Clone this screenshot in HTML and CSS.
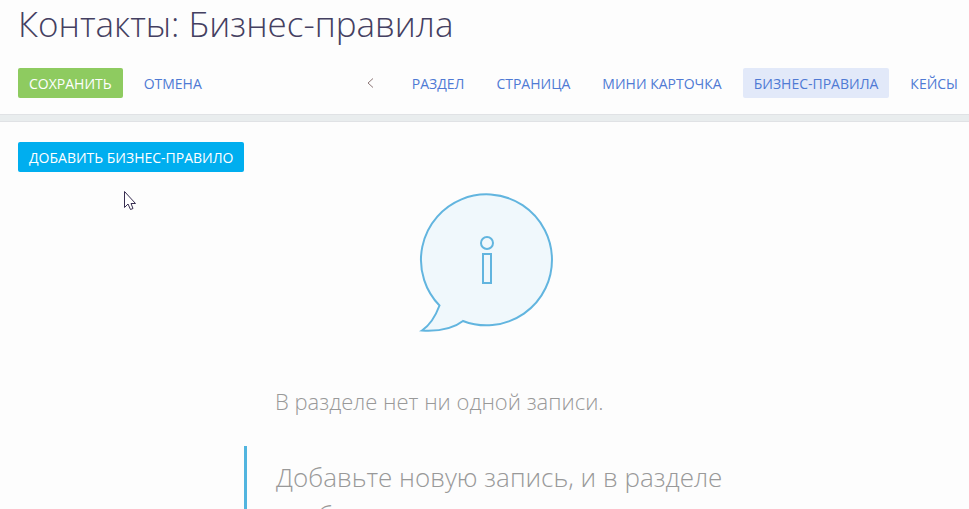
FILE: index.html
```html
<!DOCTYPE html>
<html lang="ru">
<head>
<meta charset="utf-8">
<title>Контакты: Бизнес-правила</title>
<link rel="stylesheet" href="styles.css">
</head>
<body>
<header class="header">
  <h1 class="title">Контакты: Бизнес-правила</h1>
  <div class="toolbar">
    <div class="actions">
      <button class="btn btn-save" type="button">СОХРАНИТЬ</button>
      <button class="btn btn-link" type="button">ОТМЕНА</button>
    </div>
    <nav class="tabs">
      <button class="scroll-left" type="button" aria-label="Назад">
        <svg width="7" height="10" viewBox="0 0 7 10"><path d="M6 .5 1 5l5 4.500" fill="none" stroke="#8d7777"/></svg>
      </button>
      <a class="tab" href="#">РАЗДЕЛ</a>
      <a class="tab" href="#">СТРАНИЦА</a>
      <a class="tab" href="#">МИНИ КАРТОЧКА</a>
      <a class="tab tab-active" href="#">БИЗНЕС-ПРАВИЛА</a>
      <a class="tab" href="#">КЕЙСЫ</a>
    </nav>
  </div>
</header>
<main class="content">
  <button class="btn btn-add" type="button">ДОБАВИТЬ БИЗНЕС-ПРАВИЛО</button>
  <section class="empty">
    <svg class="empty-icon" width="136" height="142" viewBox="0 0 136 142" fill="#f0f8fc" stroke="#62b5df" stroke-width="2">
      <path d="M21.500 115.500A65.500 65.500 0 1 1 45 131Q31 142 4 140.500Q15 133 21.500 115.500Z"/>
      <circle cx="69" cy="53" r="6"/>
      <path d="M65 64h8v29h-8z"/>
    </svg>
    <p class="empty-title">В разделе нет ни одной записи.</p>
    <p class="empty-hint">Добавьте новую запись, и в разделе отобразится</p>
  </section>
</main>
<svg class="cursor" width="14" height="21" viewBox="0 0 14 21"><path d="M1.500 1.500v16l3.500-3.500 2.500 5.500 2.500-1-2-5h4.500z" fill="#fff" stroke="#372d50"/></svg>
</body>
</html>
```
FILE: styles.css
```css
* {
  box-sizing: border-box;
}

body {
  margin: 0;
  height: 100vh;
  overflow: hidden;
  background: #fdfdfd;
  font-family: "Open Sans", "Noto Sans", sans-serif;
  font-size: 14px;
}

.header {
  padding: 0 0 17px 18px;
}

.title {
  margin: 0 0 20px;
  color: #444061;
  font-size: 35px;
  font-weight: 300;
  line-height: 48px;
}

.toolbar {
  display: flex;
  justify-content: space-between;
}

.actions,
.tabs {
  display: flex;
  align-items: center;
  gap: 10px;
}

.btn {
  height: 30px;
  padding: 2px 11px 0;
  border: 0;
  border-radius: 2px;
  color: #fff;
  font: inherit;
  line-height: 28px;
  white-space: nowrap;
}

.btn-save {
  background: #8ecb60;
}

.btn-link {
  background: none;
  color: #4f7ad4;
}

.btn-add {
  background: #00aeef;
}

.scroll-left {
  display: flex;
  margin-right: 17px;
  padding: 0;
  border: 0;
  background: none;
}

.tab {
  padding: 2px 11px 0;
  border-radius: 2px;
  color: #4f7ad4;
  line-height: 28px;
  text-decoration: none;
  white-space: nowrap;
}

.tab-active {
  background: #e2e9f9;
}

.content {
  padding: 21px 15px 0 18px;
  border-top: 6px solid #e9edee;
  box-shadow: 0 -1px #e0e2e5, inset 0 1px #e0e2e5;
}

.empty {
  width: 484px;
  max-width: 100%;
  margin: 18px auto 0;
}

.empty-icon {
  display: block;
  margin: 0 auto;
}

.empty-title {
  margin: 53px 0 29px;
  padding-left: 31px;
  color: #999;
  font-size: 22px;
  font-weight: 300;
  line-height: 32px;
}

.empty-hint {
  margin: 0;
  padding: 12px 0 12px 29px;
  border-left: 3px solid #52b5df;
  color: #999;
  font-size: 26px;
  font-weight: 300;
  line-height: 38px;
}

.cursor {
  position: absolute;
  top: 190px;
  left: 123px;
}
```
